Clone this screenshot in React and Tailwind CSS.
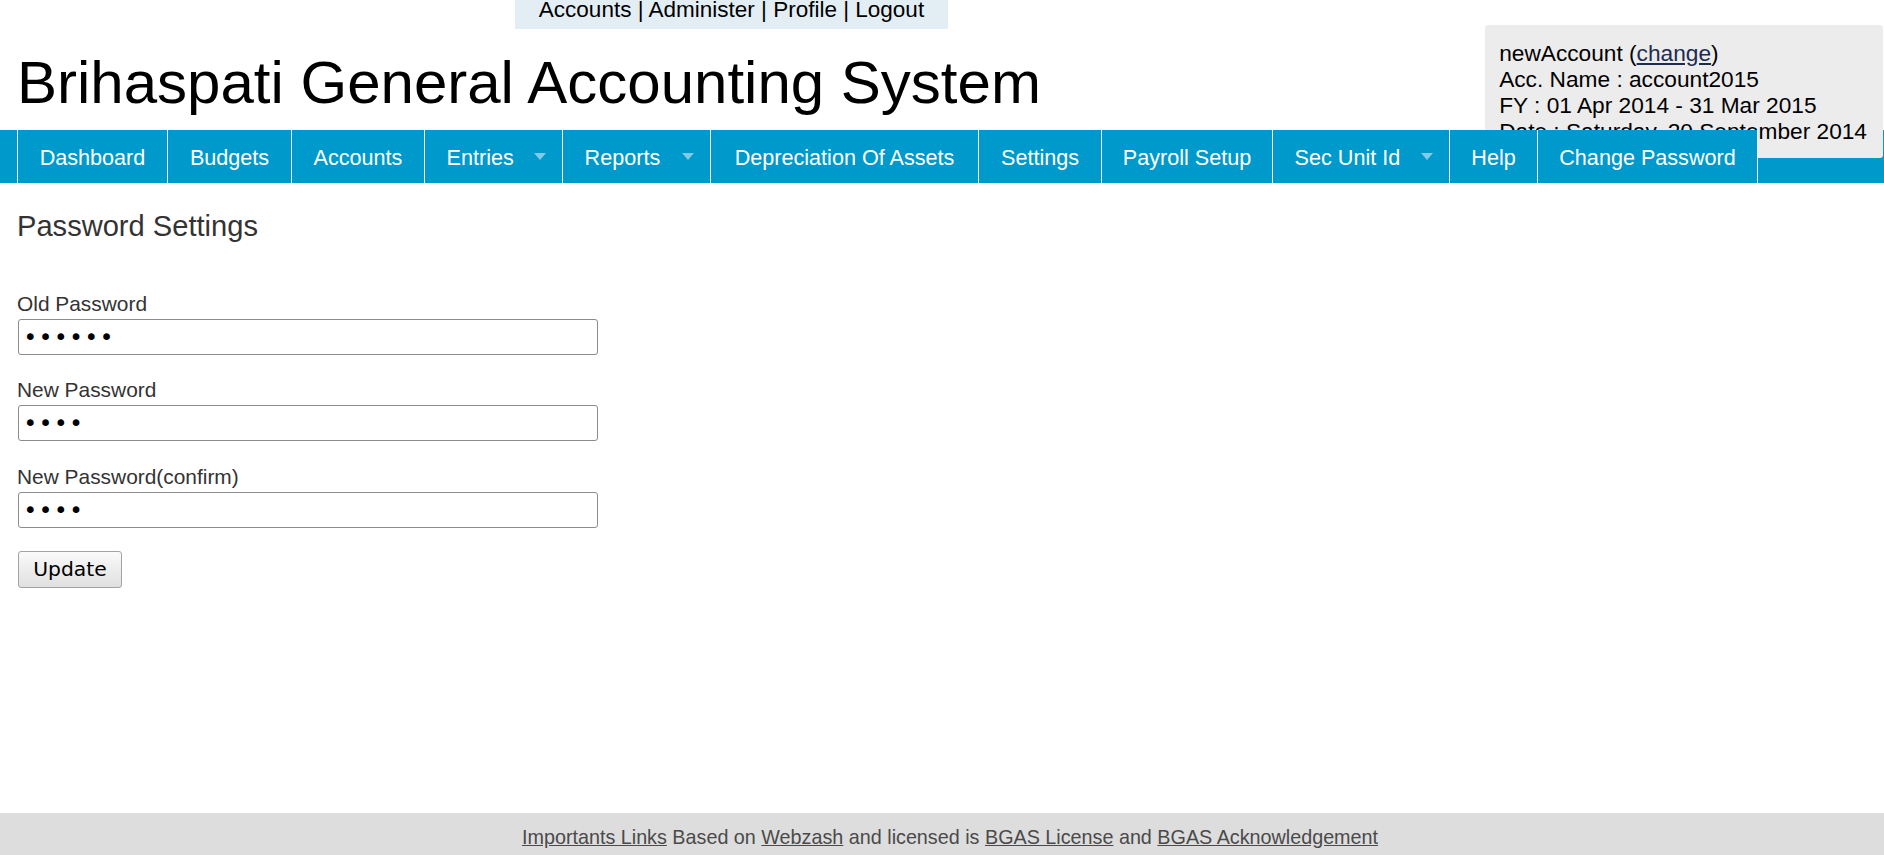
import React from "react";

const navItems = [
  { label: "Dashboard", w: "w-[150px]" },
  { label: "Budgets", w: "w-[124px]" },
  { label: "Accounts", w: "w-[133px]" },
  { label: "Entries", w: "w-[138px]", drop: true },
  { label: "Reports", w: "w-[148px]", drop: true },
  { label: "Depreciation Of Assets", w: "w-[268px]" },
  { label: "Settings", w: "w-[123px]" },
  { label: "Payroll Setup", w: "w-[171px]" },
  { label: "Sec Unit Id", w: "w-[177px]", drop: true },
  { label: "Help", w: "w-[88px]" },
  { label: "Change Password", w: "w-[220px]" },
];

function NavItem({ label, drop, w }) {
  return (
    <li
      className={
        "relative shrink-0 h-[53px] pt-px leading-[53px] bg-[#0099cc] border-r border-white text-white text-[21.6px] " +
        w +
        (drop ? " pl-[21.6px] text-left" : " text-center")
      }
    >
      <a href="#" className="whitespace-nowrap">{label}</a>
      {drop && (
        <span className="absolute right-[16px] top-[23px] w-0 h-0 border-l-[6px] border-r-[6px] border-t-[7px] border-l-transparent border-r-transparent border-t-[#80cbe7]" />
      )}
    </li>
  );
}

function Field({ label, value }) {
  return (
    <div className="mb-[23.5px]">
      <label className="block text-[20.9px] leading-[24px] text-[#333333] mb-[3px]">{label}</label>
      <input
        type="password"
        defaultValue={value}
        className="block ml-px w-[580px] h-[36px] border border-[#8c8c8c] rounded-[3px] bg-white pl-[4.5px] text-[23px] tracking-[1.7px] text-black font-['DejaVu_Sans',sans-serif] outline-none"
      />
    </div>
  );
}

export default function App() {
  return (
    <div className="min-h-screen flex flex-col bg-white font-['Liberation_Sans',Arial,sans-serif] text-black">
      <header className="relative">
        <div className="ml-[515px] w-[433px] h-[29px] bg-[#e3eef4] text-center text-[22.5px] leading-[19px] whitespace-nowrap">
          <a href="#">Accounts</a> | <a href="#">Administer</a> | <a href="#">Profile</a> | <a href="#">Logout</a>
        </div>
        <div className="h-[101px] pt-[23.5px] pl-[17px]">
          <h1 className="text-[60px] leading-[60px] font-normal whitespace-nowrap">Brihaspati General Accounting System</h1>
        </div>
        <div className="absolute top-[25px] right-[1px] bg-[#ececec] rounded-[3px] pt-[15px] pb-[14px] pl-[14px] pr-[16px] text-[22.7px] leading-[26px] whitespace-nowrap">
          <div>
            newAccount (<a href="#" className="underline text-[#1d2b50]">change</a>)
          </div>
          <div>Acc. Name : account2015</div>
          <div>FY : 01 Apr 2014 - 31 Mar 2015</div>
          <div>Date : Saturday, 20 September 2014</div>
        </div>
        <nav className="h-[53px] bg-[#0099cc] pl-[17px]">
          <ul className="relative z-10 flex border-l border-white w-max">
            {navItems.map((it) => (
              <NavItem key={it.label} {...it} />
            ))}
          </ul>
        </nav>
      </header>

      <main className="pl-[17px] pt-[25.5px]">
        <h2 className="text-[29.1px] leading-[34px] text-[#333333] font-normal mb-[49px]">Password Settings</h2>
        <form onSubmit={(e) => e.preventDefault()}>
          <Field label="Old Password" value="123456" />
          <Field label="New Password" value="1234" />
          <Field label="New Password(confirm)" value="1234" />
          <button
            type="submit"
            className="ml-px w-[104px] h-[37px] border border-[#a3a3a3] rounded-[3px] bg-gradient-to-b from-[#fafafa] to-[#e0e0e0] text-[20.3px] text-black font-['DejaVu_Sans',sans-serif]"
          >
            Update
          </button>
        </form>
      </main>

      <footer className="mt-auto h-[42px] bg-[#dddddd] pt-[13px] pl-[16px] text-center text-[19.75px] leading-[22px] text-[#4a4a4a] whitespace-nowrap">
        <a href="#" className="underline">Importants Links</a> Based on{" "}
        <a href="#" className="underline">Webzash</a> and licensed is{" "}
        <a href="#" className="underline">BGAS License</a> and{" "}
        <a href="#" className="underline">BGAS Acknowledgement</a>
      </footer>
    </div>
  );
}
